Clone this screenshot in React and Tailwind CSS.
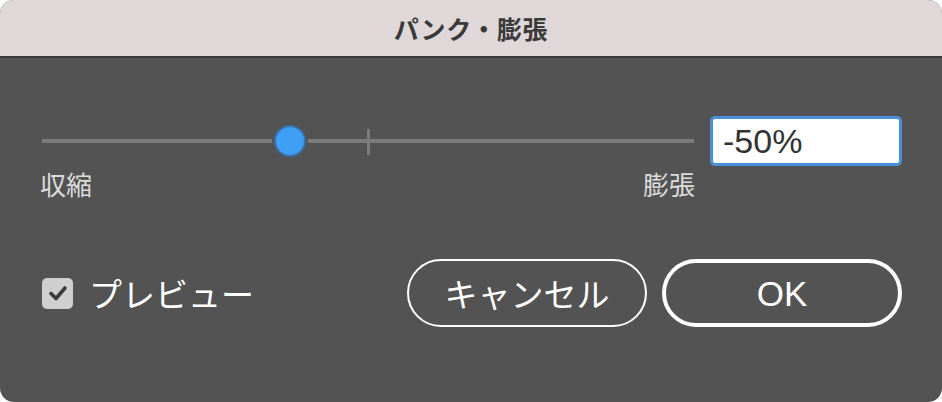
import React, { useState } from "react";

const font = {
  fontFamily: '"Noto Sans CJK JP", "Noto Sans", sans-serif',
};

export default function App() {
  const [preview, setPreview] = useState(true);
  const [value] = useState(-50);

  return (
    <div className="w-[942px] h-[402px] bg-white" style={font}>
      <div className="w-full h-full rounded-[14px] overflow-hidden flex flex-col bg-[#535353]">
        {/* title bar */}
        <div className="h-[58px] shrink-0 bg-[#e0d8d8] border-b-2 border-[#3a3a3a] flex items-center justify-center">
          <span className="text-[25px] font-bold text-[#3a3a3a] tracking-wide leading-none">
            パンク・膨張
          </span>
        </div>

        <div className="flex flex-col px-[40px] pt-[57px]">
          {/* slider row */}
          <div className="flex items-start gap-[16px]">
            <div className="w-[654px] flex flex-col">
              <div className="relative h-[52px] flex items-center">
                <div className="w-full h-[4px] bg-[#7c7c7c] ml-[2px]" />
                <div className="absolute left-[327px] top-[14px] w-[3px] h-[26px] bg-[#7c7c7c]" />
                <div className="absolute left-[232px] top-[8px] w-[36px] h-[36px] rounded-full bg-[#535353] flex items-center justify-center">
                  <div className="w-[32px] h-[32px] rounded-full bg-[#3f9ff5] border-2 border-[#3a6fa8]" />
                </div>
              </div>
              <div className="flex justify-between text-[26px] text-[#dcdcdc] leading-none mt-[4px]">
                <span>収縮</span>
                <span className="mr-[-1px]">膨張</span>
              </div>
            </div>
            <div className="w-[192px] h-[50px] mt-[1px] bg-white border-[3px] border-[#4a90d9] rounded-[5px] flex items-center px-[10px]">
              <span
                className="text-[34px] text-[#333333] leading-none"
                style={{ fontFamily: '"Liberation Sans", Arial, sans-serif' }}
              >
                {value}%
              </span>
            </div>
          </div>

          {/* bottom row */}
          <div className="flex items-center mt-[62px]">
            <button
              className="flex items-center gap-[16px] ml-[2px]"
              onClick={() => setPreview(!preview)}
            >
              <span className="w-[31px] h-[31px] rounded-[5px] bg-[#cfcfcf] flex items-center justify-center">
                {preview && (
                  <svg width="24" height="24" viewBox="0 0 24 24">
                    <path
                      d="M5 12.5 L10 17.5 L19 7"
                      fill="none"
                      stroke="#3c3c3c"
                      strokeWidth="3.6"
                      strokeLinecap="round"
                      strokeLinejoin="round"
                    />
                  </svg>
                )}
              </span>
              <span className="text-[33px] text-white leading-none">
                プレビュー
              </span>
            </button>
            <div className="ml-auto flex gap-[15px] mr-[0px]">
              <button className="w-[240px] h-[68px] rounded-full border-2 border-white text-white text-[33px] leading-none flex items-center justify-center">
                キャンセル
              </button>
              <button
                className="w-[240px] h-[68px] rounded-full border-4 border-white text-white text-[35px] leading-none flex items-center justify-center"
                style={{ fontFamily: '"Liberation Sans", Arial, sans-serif' }}
              >
                OK
              </button>
            </div>
          </div>
        </div>
      </div>
    </div>
  );
}
